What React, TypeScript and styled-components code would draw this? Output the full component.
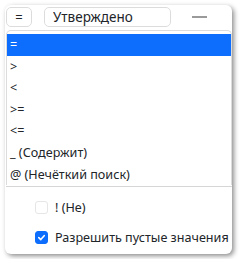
import styled, { createGlobalStyle } from "styled-components";

const OPERATORS = ["=", ">", "<", ">=", "<=", "_ (Содержит)", "@ (Нечёткий поиск)"];

const GlobalStyle = createGlobalStyle`
  body {
    margin: 0;
    background: #fff;
    font-family: "Noto Sans", "Open Sans", sans-serif;
    color: #212529;
  }
`;

const App = () => {
  return (
    <>
      <GlobalStyle />
      <Card>
        <Toolbar>
          <OpButton>=</OpButton>
          <ValueInput defaultValue="Утверждено" />
          <Dash />
        </Toolbar>
        <ListBox>
          {OPERATORS.map((op, i) => (
            <Option key={op} $selected={i === 0}>
              {op}
            </Option>
          ))}
        </ListBox>
        <Options>
          <CheckRow>
            <Box />
            ! (Не)
          </CheckRow>
          <CheckRow>
            <Box $checked>
              <svg width="9" height="9" viewBox="0 0 10 10">
                <path d="M2 5.2 L4.2 7.3 L8 3" fill="none" stroke="#fff" strokeWidth="1.8" strokeLinecap="round" strokeLinejoin="round" />
              </svg>
            </Box>
            Разрешить пустые значения
          </CheckRow>
        </Options>
      </Card>
    </>
  );
};

const Card = styled.div`
  margin: 5px;
  width: 227px;
  height: 249px;
  box-sizing: border-box;
  background: #fff;
  border-radius: 6px;
  box-shadow: 2px 2px 5px rgba(0, 0, 0, 0.45);
  padding: 2px 0 0 1px;
  display: flex;
  flex-direction: column;
  overflow: hidden;
`;

const Toolbar = styled.div`
  display: flex;
  align-items: center;
  height: 20px;
`;

const OpButton = styled.div`
  width: 26px;
  height: 20px;
  box-sizing: border-box;
  border: 1px solid #dcdcdc;
  border-radius: 5px;
  display: flex;
  align-items: center;
  justify-content: center;
  font-size: 13px;
`;

const ValueInput = styled.input`
  margin-left: 12px;
  width: 127px;
  height: 20px;
  box-sizing: border-box;
  border: 1px solid #dcdcdc;
  border-radius: 5px;
  padding: 0 0 0 8px;
  font-family: "Noto Sans", "Open Sans", sans-serif;
  font-size: 13.5px;
  color: #212529;
  outline: none;
`;

const Dash = styled.div`
  margin-left: 21px;
  width: 15px;
  height: 2px;
  background: #9a9a9a;
`;

const ListBox = styled.div`
  margin-top: 3px;
  border: 1px solid #dcdcdc;
  border-bottom: none;
  border-radius: 5px 5px 0 0;
  padding-top: 3px;
  display: flex;
  flex-direction: column;
`;

const Option = styled.div<{ $selected?: boolean }>`
  height: 21.6px;
  line-height: 21.6px;
  padding-left: 3px;
  font-size: 12.6px;
  white-space: nowrap;
  background: ${(p) => (p.$selected ? "#0d6efd" : "transparent")};
  color: ${(p) => (p.$selected ? "#fff" : "#212529")};
`;

const Options = styled.div`
  border-top: 1px solid #d6d6d6;
  margin-top: 1px;
  padding: 12px 0 0 29px;
  display: flex;
  flex-direction: column;
  gap: 13px;
`;

const CheckRow = styled.div`
  display: flex;
  align-items: center;
  gap: 7px;
  font-size: 12.6px;
  white-space: nowrap;
  color: #212529;
`;

const Box = styled.div<{ $checked?: boolean }>`
  width: 13px;
  height: 13px;
  box-sizing: border-box;
  border-radius: 3px;
  border: 1px solid ${(p) => (p.$checked ? "#0d6efd" : "#e6e6e6")};
  background: ${(p) => (p.$checked ? "#0d6efd" : "#fff")};
  display: flex;
  align-items: center;
  justify-content: center;
  flex-shrink: 0;
`;

export default App;
